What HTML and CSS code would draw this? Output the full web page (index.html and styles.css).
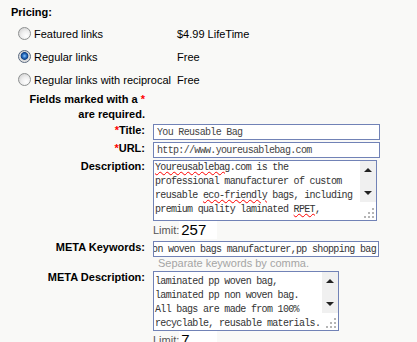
FILE: index.html
```html
<!DOCTYPE html>
<html lang="en">
<head>
    <meta charset="UTF-8">
    <title>Submit Link</title>
    <link rel="stylesheet" href="styles.css">
</head>
<body>
    <div class="page">
        <div class="section-title">Pricing:</div>

        <div class="pricing">
            <label class="price-row">
                <input type="radio" name="plan" class="radio">
                <span class="plan-name">Featured links</span>
                <span class="plan-price">$4.99 LifeTime</span>
            </label>
            <label class="price-row">
                <input type="radio" name="plan" class="radio" checked>
                <span class="plan-name">Regular links</span>
                <span class="plan-price">Free</span>
            </label>
            <label class="price-row">
                <input type="radio" name="plan" class="radio">
                <span class="plan-name">Regular links with reciprocal</span>
                <span class="plan-price">Free</span>
            </label>
        </div>

        <div class="form">
            <div class="note">Fields marked with a <span class="req">*</span><br>are required.</div>
            <div></div>

            <label class="field-label" for="title"><span class="req">*</span>Title:</label>
            <input type="text" id="title" class="text-input" value="You Reusable Bag">

            <label class="field-label" for="url"><span class="req">*</span>URL:</label>
            <input type="text" id="url" class="text-input" value="http://www.youreusablebag.com">

            <div class="field-label">Description:</div>
            <div class="field">
                <div class="textbox textbox-desc">
                    <div class="textbox-content">
                        <span class="typo">Youreusablebag</span>.com is the<br>
                        professional manufacturer of custom<br>
                        reusable <span class="typo">eco-friendly</span> bags, including<br>
                        premium quality laminated <span class="typo">RPET</span>,
                    </div>
                    <div class="scrollbar">
                        <div class="track">
                            <span class="arrow arrow-up"></span>
                            <span class="arrow arrow-down"></span>
                        </div>
                        <div class="grip">
                            <svg width="10" height="10" viewBox="0 0 10 10">
                                <rect x="8" y="0" width="2" height="2" fill="#b5b5b5"/>
                                <rect x="4" y="4" width="2" height="2" fill="#b5b5b5"/>
                                <rect x="8" y="4" width="2" height="2" fill="#b5b5b5"/>
                                <rect x="0" y="8" width="2" height="2" fill="#b5b5b5"/>
                                <rect x="4" y="8" width="2" height="2" fill="#b5b5b5"/>
                                <rect x="8" y="8" width="2" height="2" fill="#b5b5b5"/>
                            </svg>
                        </div>
                    </div>
                </div>
                <div class="limit">Limit:<span class="limit-count">257</span></div>
            </div>

            <div class="field-label">META Keywords:</div>
            <div class="field">
                <div class="text-input keywords">
                    <span>on woven bags manufacturer,pp shopping bag</span>
                </div>
                <div class="hint">Separate keywords by comma.</div>
            </div>

            <div class="field-label">META Description:</div>
            <div class="field">
                <div class="textbox textbox-meta">
                    <div class="textbox-content">
                        laminated pp woven bag,<br>
                        laminated pp non woven bag.<br>
                        All bags are made from 100%<br>
                        recyclable, reusable materials.
                    </div>
                    <div class="scrollbar">
                        <div class="track">
                            <span class="arrow arrow-up"></span>
                            <span class="arrow arrow-down"></span>
                        </div>
                        <div class="grip">
                            <svg width="10" height="10" viewBox="0 0 10 10">
                                <rect x="8" y="0" width="2" height="2" fill="#b5b5b5"/>
                                <rect x="4" y="4" width="2" height="2" fill="#b5b5b5"/>
                                <rect x="8" y="4" width="2" height="2" fill="#b5b5b5"/>
                                <rect x="0" y="8" width="2" height="2" fill="#b5b5b5"/>
                                <rect x="4" y="8" width="2" height="2" fill="#b5b5b5"/>
                                <rect x="8" y="8" width="2" height="2" fill="#b5b5b5"/>
                            </svg>
                        </div>
                    </div>
                </div>
                <div class="limit">Limit:<span class="limit-count">7</span></div>
            </div>
        </div>
    </div>
</body>
</html>
```

FILE: styles.css
```css
* {
    margin: 0;
    padding: 0;
    box-sizing: border-box;
}

body {
    font-family: 'Liberation Sans', Arial, sans-serif;
    font-size: 11px;
    color: #000;
    background: #f9f9f7;
}

.page {
    padding: 4px 0 0 11px;
}

.section-title {
    font-weight: bold;
    line-height: 16px;
    height: 18px;
}

.pricing {
    margin-left: 7px;
}

.price-row {
    display: grid;
    grid-template-columns: 13px 140px auto;
    column-gap: 3px;
    align-items: center;
    height: 23px;
}

.radio {
    appearance: none;
    -webkit-appearance: none;
    width: 13px;
    height: 13px;
    border-radius: 50%;
    border: 1px solid #8d9090;
    background: radial-gradient(circle at 65% 70%, #ffffff 0%, #eeeeee 45%, #c8c8c8 100%);
    margin: 0;
}

.radio:checked {
    border-color: #5a6a80;
    background: radial-gradient(circle at 50% 45%, #8cc6ff 0px, #2a6fc0 2px, #0d3f84 3.5px, #d8d8d8 4.2px, #f2f2f2 100%);
}

.form {
    display: grid;
    grid-template-columns: 134px 227px;
    column-gap: 8px;
    margin-top: 1px;
}

.note {
    font-weight: bold;
    text-align: right;
    line-height: 15px;
    margin-bottom: 2px;
}

.req {
    color: #f00;
}

.field-label {
    font-weight: bold;
    text-align: right;
    line-height: 13px;
}

.text-input {
    display: block;
    width: 227px;
    height: 16px;
    border: 1px solid #7182b6;
    background: #fff;
    font-family: 'Liberation Mono', 'Courier New', monospace;
    font-size: 10px;
    letter-spacing: -0.67px;
    color: #444;
    padding: 0 3px;
    margin-bottom: 2px;
    outline: none;
}

.keywords {
    width: 226px;
    margin-bottom: 0;
    display: flex;
    justify-content: flex-end;
    align-items: center;
    overflow: hidden;
    white-space: nowrap;
    padding: 0 2px 0 0;
    color: #333;
}

.hint {
    color: #a5a5a5;
    padding-left: 5px;
    line-height: 12px;
    height: 12px;
    margin-bottom: 2px;
}

.textbox {
    display: flex;
    border: 1px solid #7182b6;
    background: #fff;
    overflow: hidden;
}

.textbox-desc {
    width: 224px;
    height: 61px;
}

.textbox-meta {
    width: 186px;
    height: 60px;
}

.textbox-content {
    flex: 1;
    overflow: hidden;
    white-space: nowrap;
    font-family: 'Liberation Mono', 'Courier New', monospace;
    font-size: 10px;
    letter-spacing: -0.67px;
    line-height: 14px;
    color: #333;
    padding-left: 1px;
}

.textbox-meta .textbox-content {
    padding-top: 3px;
}

.typo {
    text-decoration: underline wavy #f00;
    text-decoration-thickness: 1px;
    text-underline-offset: 1px;
}

.scrollbar {
    width: 16px;
    display: flex;
    flex-direction: column;
}

.track {
    height: 41px;
    background: #f0f0f0;
    display: flex;
    flex-direction: column;
    justify-content: space-between;
    align-items: center;
}

.arrow {
    display: block;
    width: 0;
    height: 0;
    border-left: 4px solid transparent;
    border-right: 4px solid transparent;
}

.arrow-up {
    border-bottom: 4px solid #222;
    margin-top: 7px;
}

.arrow-down {
    border-top: 4px solid #222;
    margin-bottom: 7px;
}

.grip {
    flex: 1;
    display: flex;
    align-items: flex-end;
    justify-content: flex-end;
    padding: 0 2px 2px 0;
}

.limit {
    display: flex;
    align-items: center;
    height: 18px;
    color: #555;
    margin-bottom: 2px;
}

.limit-count {
    display: inline-block;
    width: 38px;
    height: 18px;
    line-height: 18px;
    background: #fff;
    padding-left: 2px;
    font-size: 15px;
    color: #000;
}
```
